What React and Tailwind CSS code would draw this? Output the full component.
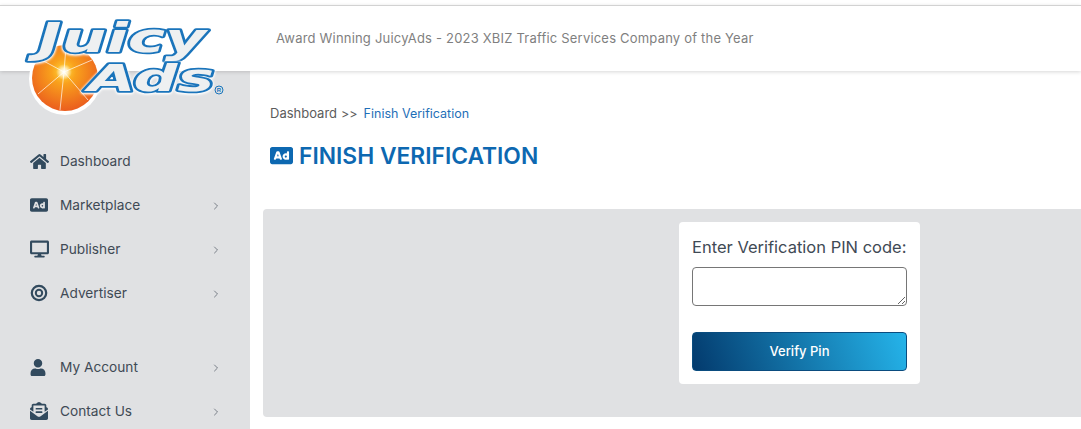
import React from 'react';
import { FaHome, FaAd, FaDesktop, FaUser, FaEnvelopeOpenText } from 'react-icons/fa';
import { ChevronRight } from 'lucide-react';

const TargetIcon = ({ className }) => (
  <svg viewBox="0 0 18 18" className={className}>
    <circle cx="9" cy="9" r="7.2" fill="none" stroke="currentColor" strokeWidth="2.2" />
    <circle cx="9" cy="9" r="3.2" fill="none" stroke="currentColor" strokeWidth="2" />
  </svg>
);

// one text per word: the outline comes from paint-order, the white rim from a shadow
const LogoWord = ({ x, y, size, width, children }) => (
  <text
    x={x}
    y={y}
    textLength={width}
    lengthAdjust="spacingAndGlyphs"
    fontFamily="'DejaVu Sans', sans-serif"
    fontWeight="700"
    fontStyle="italic"
    fontSize={size}
    fill="#eef0f1"
    stroke="#1a74bb"
    strokeWidth="3.6"
    strokeLinejoin="round"
    paintOrder="stroke"
    className="[filter:drop-shadow(0_0_1px_#fff)_drop-shadow(0_1px_1px_#fff)]"
  >
    {children}
  </text>
);

const Logo = () => (
  <svg viewBox="0 0 240 115" className="absolute left-0 top-0 w-[240px] h-[115px]">
    <defs>
      <radialGradient id="orange" cx="0.48" cy="0.4" r="0.62">
        <stop offset="0" stopColor="#ffd83a" />
        <stop offset="0.3" stopColor="#f9a11c" />
        <stop offset="1" stopColor="#ea5a1e" />
      </radialGradient>
      <radialGradient id="glow">
        <stop offset="0" stopColor="#fff" />
        <stop offset="0.45" stopColor="#fff" stopOpacity="0.7" />
        <stop offset="1" stopColor="#fff" stopOpacity="0" />
      </radialGradient>
    </defs>
    <circle cx="65" cy="79" r="36" fill="#fff" />
    <circle cx="65" cy="78" r="33" fill="url(#orange)" />
    <g stroke="#fff" strokeWidth="0.8" opacity="0.85">
      <path d="M64 72 L66 46" />
      <path d="M64 72 L38 58" />
      <path d="M64 72 L92 60" />
      <path d="M64 72 L38 94" />
      <path d="M64 72 L60 110" />
      <path d="M64 72 L88 100" />
    </g>
    <circle cx="64" cy="72" r="8" fill="url(#glow)" />
    <LogoWord x="38" y="52" size="40" width="168">Juicy</LogoWord>
    <LogoWord x="88" y="91" size="38" width="126">Ads</LogoWord>
    <circle cx="219" cy="90" r="4" fill="none" stroke="#1a74bb" strokeWidth="1" />
    <text x="219" y="92.2" textAnchor="middle" fontSize="6" fontWeight="700" fontFamily="'Liberation Sans', sans-serif" fill="#1a74bb">R</text>
  </svg>
);

const NavItem = ({ icon: Icon, label, arrow = true, iconClass }) => (
  <div className="h-11 flex items-center pl-[30px] pr-[28px] text-[#3f4a55]">
    <span className="w-[30px] shrink-0">
      <Icon className={iconClass} />
    </span>
    <span className="flex-1 text-[13.7px]">{label}</span>
    {arrow && <ChevronRight size={12} strokeWidth={1.5} className="mt-px text-[#555e68]" />}
  </div>
);

export default function App() {
  return (
    <div className="relative h-[429px] overflow-hidden bg-white font-['Inter',sans-serif]">
      <div className="h-[5px]" />
      <div className="h-[66px] border-t border-[#d2d2d2] bg-white shadow-[0_1px_4px_rgba(0,0,0,0.16)] relative z-10 pl-[276px] flex items-center">
        <span className="text-[13px] text-[#7f7f7f] tracking-[0.2px]">
          Award Winning JuicyAds - 2023 XBIZ Traffic Services Company of the Year
        </span>
      </div>
      <div className="flex h-[358px]">
        <aside className="w-[250px] shrink-0 bg-[#e0e1e3] pt-[68px]">
          <NavItem icon={FaHome} label="Dashboard" arrow={false} iconClass="w-[19px] h-[17px] text-[#324a5e]" />
          <NavItem icon={FaAd} label="Marketplace" iconClass="w-[18px] h-[18px] text-[#324a5e]" />
          <NavItem icon={FaDesktop} label="Publisher" iconClass="w-[19px] h-[18px] text-[#324a5e]" />
          <NavItem icon={TargetIcon} label="Advertiser" iconClass="w-[18px] h-[18px] text-[#324a5e]" />
          <div className="h-[30px]" />
          <NavItem icon={FaUser} label="My Account" iconClass="w-[16px] h-[17px] text-[#324a5e]" />
          <NavItem icon={FaEnvelopeOpenText} label="Contact Us" iconClass="w-[18px] h-[18px] text-[#324a5e]" />
        </aside>
        <main className="flex-1 min-w-0 pl-[13px] pt-[35px]">
          <div className="pl-[7px] flex items-center h-4 text-[12.5px]">
            <span className="text-[#5c5c5c] text-[13px]">Dashboard</span>
            <span className="ml-1 text-[#5c5c5c]">&gt;&gt;</span>
            <span className="ml-[6px] text-[#1f6fb8]">Finish Verification</span>
          </div>
          <div className="pl-[7px] mt-[19px] flex items-center gap-[6px] text-[#0d68b1]">
            <FaAd className="w-[23px] h-[23px]" />
            <h1 className="text-[22.8px] leading-[29px] font-semibold whitespace-nowrap">FINISH VERIFICATION</h1>
          </div>
          <section className="mt-[39px] h-[208px] rounded-l-[4px] bg-[#e0e1e3] pt-[13px] pl-[416px]">
            <div className="w-[241px] h-[162px] bg-white rounded-[4px] pt-[13px] px-[13px]">
              <label className="block text-[16.5px] leading-6 text-[#3f4a55] whitespace-nowrap">Enter Verification PIN code:</label>
              <textarea className="block mt-[8px] w-[215px] h-[39px] border border-[#767676] rounded-[4px] bg-white" />
              <button className="mt-[26px] w-[215px] h-[39px] rounded-[4px] border border-[#0a4c7f] text-white text-[13px] font-medium bg-[linear-gradient(70deg,#033a6d,#25b4ea)]">
                Verify Pin
              </button>
            </div>
          </section>
        </main>
      </div>
      <div className="absolute inset-0 z-20 pointer-events-none">
        <Logo />
      </div>
    </div>
  );
}
